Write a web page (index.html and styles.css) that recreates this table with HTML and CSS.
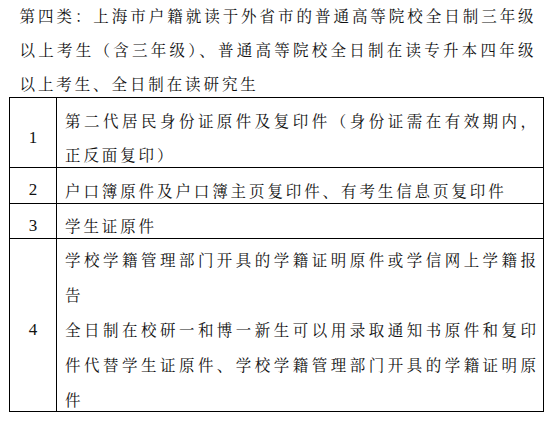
FILE: index.html
```html
<!DOCTYPE html>
<html lang="zh-CN">
<head>
<meta charset="utf-8">
<title>第四类</title>
<link rel="stylesheet" href="styles.css">
</head>
<body>
<p class="heading">第四类：上海市户籍就读于外省市的普通高等院校全日制三年级以上考生（含三年级）、普通高等院校全日制在读专升本四年级以上考生、全日制在读研究生</p>
<table class="list">
  <colgroup><col class="col-num"><col class="col-text"></colgroup>
  <tr>
    <td class="num">1</td>
    <td class="text"><div class="cell-text r1">第二代居民身份证原件及复印件（身份证需在有效期内，正反面复印）</div></td>
  </tr>
  <tr>
    <td class="num">2</td>
    <td class="text"><div class="cell-text r2">户口簿原件及户口簿主页复印件、有考生信息页复印件</div></td>
  </tr>
  <tr>
    <td class="num">3</td>
    <td class="text"><div class="cell-text r3">学生证原件</div></td>
  </tr>
  <tr>
    <td class="num">4</td>
    <td class="text"><div class="cell-text r4"><p class="para">学校学籍管理部门开具的学籍证明原件或学信网上学籍报告</p><p class="para">全日制在校研一和博一新生可以用录取通知书原件和复印件代替学生证原件、学校学籍管理部门开具的学籍证明原件</p></div></td>
  </tr>
</table>
</body>
</html>
```
FILE: styles.css
```css
body {
  margin: 0;
  background: #fff;
  color: #111;
  font-family: "Noto Serif CJK SC", "Noto Sans CJK SC", sans-serif;
}

.heading {
  margin: -2.5px 0 -2.5px 0;
  padding-left: 19.5px;
  width: 517px;
  font-size: 15.5px;
  letter-spacing: 2.9px;
  line-height: 34px;
  text-align: justify;
}

.list {
  margin-left: 9px;
  border-collapse: collapse;
  table-layout: fixed;
  width: 535px;
  font-size: 15.5px;
  letter-spacing: 2.9px;
}

.col-num { width: 47px; }

.list td {
  border: 1px solid #000;
  padding: 0;
}

.list td.num {
  text-align: center;
  vertical-align: middle;
  font-family: "Liberation Serif", serif;
  font-size: 17px;
  letter-spacing: 0;
  padding-top: 10px;
}

.list td.text {
  vertical-align: top;
  text-align: justify;
  padding: 0 4px 0 8px;
}

.cell-text {
  line-height: 34px;
  box-sizing: content-box;
}

.r1 { padding-top: 5px; height: 64px; }
.r2 { padding-top: 5px; height: 29.5px; }
.r3 { padding-top: 4.5px; height: 30px; }
.r4 { padding-top: 3px; height: 169px; line-height: 35px; }

.para { margin: 0; }
```
